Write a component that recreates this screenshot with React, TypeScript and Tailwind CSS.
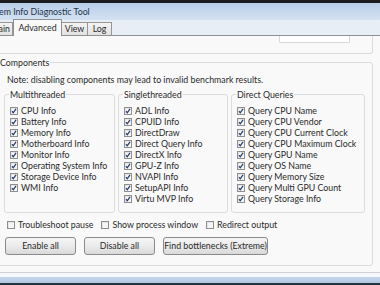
const multi = [
  "CPU Info",
  "Battery Info",
  "Memory Info",
  "Motherboard Info",
  "Monitor Info",
  "Operating System Info",
  "Storage Device Info",
  "WMI Info",
];

const single = [
  "ADL Info",
  "CPUID Info",
  "DirectDraw",
  "Direct Query Info",
  "DirectX Info",
  "GPU-Z Info",
  "NVAPI Info",
  "SetupAPI Info",
  "Virtu MVP Info",
];

const direct = [
  "Query CPU Name",
  "Query CPU Vendor",
  "Query CPU Current Clock",
  "Query CPU Maximum Clock",
  "Query GPU Name",
  "Query OS Name",
  "Query Memory Size",
  "Query Multi GPU Count",
  "Query Storage Info",
];

function Box({ checked }: { checked?: boolean }) {
  return (
    <svg width="8" height="8" viewBox="0 0 8 8" className="shrink-0">
      <rect x="0.5" y="0.5" width="7" height="7" fill="#f4f4f4" stroke="#8e8f8f" />
      <rect x="1" y="1" width="6" height="6" fill="#e6e6e6" />
      <rect x="2" y="2" width="5" height="5" fill="#f6f6f6" />
      {checked && (
        <path d="M2 4.3 L3.3 5.8 L6 1.9" fill="none" stroke="#2b3f6e" strokeWidth="1.3" />
      )}
    </svg>
  );
}

function Check({ label, checked }: { label: string; checked?: boolean }) {
  return (
    <div className="flex h-[11px] items-center gap-[3px] whitespace-nowrap leading-[11px]">
      <Box checked={checked} />
      <span>{label}</span>
    </div>
  );
}

function Group({ title, items, width }: { title: string; items: string[]; width: string }) {
  return (
    <fieldset className={`${width} shrink-0 rounded-[3px] border border-[#dcdcdc] px-[4px] pb-[8px]`}>
      <legend className="px-[1px] leading-[11px]">{title}</legend>
      <div className="flex flex-col pl-[1px] pt-[5px]">
        {items.map((s) => (
          <Check key={s} label={s} checked />
        ))}
      </div>
    </fieldset>
  );
}

function Btn({ children, width }: { children: string; width: string }) {
  return (
    <button
      className={`${width} h-[18px] rounded-[3px] border border-[#8a8a8a] bg-gradient-to-b from-[#f5f5f5] via-[#ebebeb] to-[#d9d9d9] text-center leading-[16px]`}
    >
      {children}
    </button>
  );
}

export default function App() {
  return (
    <div className="flex h-[285px] w-[380px] flex-col overflow-hidden bg-[#f9f9f9] font-['Lato',sans-serif] text-[8.8px] text-[#2a2a2a]">
      <div className="h-[3px] shrink-0 bg-[#1b1c1e]" />
      <div className="flex h-[17px] shrink-0 items-center bg-gradient-to-b from-[#b8cee8] to-[#d4e2f2] text-[#24344a]">
        <span className="-ml-[1px]">em Info Diagnostic Tool</span>
      </div>

      <div className="flex h-[16px] shrink-0 items-end border-b border-[#8d9095] bg-[#e8eef6]">
        <div className="-ml-[5px] flex h-[13px] w-[18px] items-center justify-end border border-b-0 border-[#969696] bg-gradient-to-b from-[#f4f4f4] to-[#e2e2e2] pr-[2px]">
          ain
        </div>
        <div className="relative z-10 -mb-[1px] flex h-[17px] w-[49px] items-center justify-center border border-b-0 border-[#8d9095] bg-[#f9f9f9]">
          Advanced
        </div>
        <div className="flex h-[13px] w-[26px] items-center justify-center border-r border-t border-[#969696] bg-gradient-to-b from-[#f4f4f4] to-[#e2e2e2]">
          View
        </div>
        <div className="flex h-[13px] w-[24px] items-center justify-center border-r border-t border-[#969696] bg-gradient-to-b from-[#f4f4f4] to-[#e2e2e2]">
          Log
        </div>
      </div>

      <div className="flex h-[236px] shrink-0 flex-col">
        <div className="-ml-[4px] mr-[7px] flex h-[18px] shrink-0 justify-end rounded-br-[3px] border-b border-r border-[#dcdcdc] pr-[22px]">
          <div className="h-[7px] w-[71px] rounded-b-[2px] border-x border-b border-[#d6d6d6] bg-white" />
        </div>

        <fieldset className="-ml-[4px] mr-[7px] mt-[3px] rounded-[3px] border border-[#dcdcdc] px-[2px] pb-[10px]">
          <legend className="px-[1px] leading-[11px]">Components</legend>
          <p className="mt-[6px] pl-[8px] leading-[11px]">
            Note: disabling components may lead to invalid benchmark results.
          </p>

          <div className="mt-[4px] flex gap-[3px] pl-[5px]">
            <Group title="Multithreaded" items={multi} width="w-[111px]" />
            <Group title="Singlethreaded" items={single} width="w-[110px]" />
            <Group title="Direct Queries" items={direct} width="w-[134px]" />
          </div>

          <div className="mt-[6px] flex gap-[8px] pl-[8px]">
            <Check label="Troubleshoot pause" />
            <Check label="Show process window" />
            <Check label="Redirect output" />
          </div>

          <div className="mt-[7px] flex gap-[8px] pl-[6px]">
            <Btn width="w-[71px]">Enable all</Btn>
            <Btn width="w-[71px]">Disable all</Btn>
            <Btn width="w-[105px]">Find bottlenecks (Extreme)</Btn>
          </div>
        </fieldset>
      </div>

      <div className="h-[1px] shrink-0 bg-[#cfd0d8]" />
      <div className="h-[4px] shrink-0 bg-[#f7f8fb]" />
      <div className="h-[6px] shrink-0 bg-gradient-to-b from-[#c4d6ec] to-[#b3c9e3]" />
      <div className="flex-1 bg-[#26343d]" />
    </div>
  );
}
